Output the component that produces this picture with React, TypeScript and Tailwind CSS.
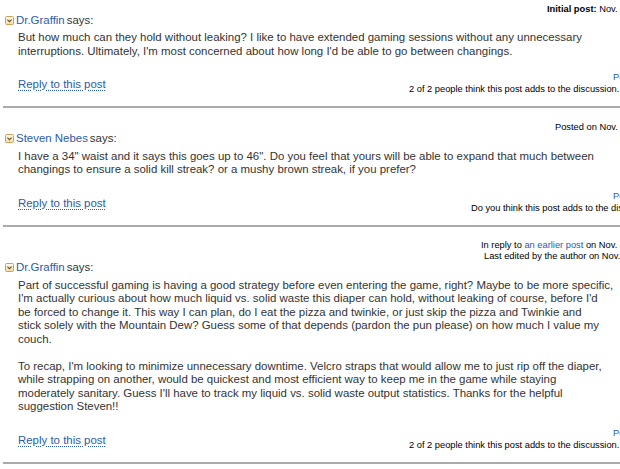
import React from "react";

interface MetaLine {
  pad: string;
  content: React.ReactNode;
}

interface Post {
  top: string;
  meta: MetaLine[];
  author: string;
  paragraphs: string[][];
  voteWidth: string;
  permPad: string;
  vote: string;
}

const posts: Post[] = [
  {
    top: "pt-[3.5px]",
    meta: [
      {
        pad: "pl-[547px]",
        content: (
          <>
            <span className="font-bold">Initial post:</span> Nov. 12, 2009 1:50:21 PM PST
          </>
        ),
      },
    ],
    author: "Dr.Graffin",
    paragraphs: [
      [
        "But how much can they hold without leaking? I like to have extended gaming sessions without any unnecessary",
        "interruptions. Ultimately, I'm most concerned about how long I'd be able to go between changings.",
      ],
    ],
    voteWidth: "w-[211px]",
    permPad: "pl-[204px]",
    vote: "2 of 2 people think this post adds to the discussion. Do you? Yes No",
  },
  {
    top: "pt-[13.5px]",
    meta: [{ pad: "pl-[555px]", content: "Posted on Nov. 12, 2009 2:04:37 PM PST" }],
    author: "Steven Nebes",
    paragraphs: [
      [
        "I have a 34\" waist and it says this goes up to 46\". Do you feel that yours will be able to expand that much between",
        "changings to ensure a solid kill streak? or a mushy brown streak, if you prefer?",
      ],
    ],
    voteWidth: "w-[149px]",
    permPad: "pl-[142px]",
    vote: "Do you think this post adds to the discussion? Yes No",
  },
  {
    top: "pt-[13.5px]",
    meta: [
      {
        pad: "pl-[481px]",
        content: (
          <>
            In reply to <a className="text-[#2a5ca8]">an earlier post</a> on Nov. 12, 2009 2:04:37 PM PST
          </>
        ),
      },
      { pad: "pl-[484px]", content: "Last edited by the author on Nov. 12, 2009 2:31:10 PM PST" },
    ],
    author: "Dr.Graffin",
    paragraphs: [
      [
        "Part of successful gaming is having a good strategy before even entering the game, right? Maybe to be more specific,",
        "I'm actually curious about how much liquid vs. solid waste this diaper can hold, without leaking of course, before I'd",
        "be forced to change it. This way I can plan, do I eat the pizza and twinkie, or just skip the pizza and Twinkie and",
        "stick solely with the Mountain Dew? Guess some of that depends (pardon the pun please) on how much I value my",
        "couch.",
      ],
      [
        "To recap, I'm looking to minimize unnecessary downtime. Velcro straps that would allow me to just rip off the diaper,",
        "while strapping on another, would be quickest and most efficient way to keep me in the game while staying",
        "moderately sanitary. Guess I'll have to track my liquid vs. solid waste output statistics. Thanks for the helpful",
        "suggestion Steven!!",
      ],
    ],
    voteWidth: "w-[211px]",
    permPad: "pl-[204px]",
    vote: "2 of 2 people think this post adds to the discussion. Do you? Yes No",
  },
];

const ToggleIcon = () => (
  <svg width="9" height="9" viewBox="0 0 9 9" className="shrink-0">
    <defs>
      <linearGradient id="tg" x1="0" y1="0" x2="0" y2="1">
        <stop offset="0" stopColor="#fffdf4" />
        <stop offset="1" stopColor="#f1dca6" />
      </linearGradient>
    </defs>
    <rect x="0.5" y="0.5" width="8" height="8" rx="1" fill="url(#tg)" stroke="#c9a15a" />
    <path d="M2.4 3.6 L4.5 5.6 L6.6 3.6" fill="none" stroke="#6e5020" strokeWidth="1.2" />
  </svg>
);

const PostBlock = ({ post }: { post: Post }) => (
  <div className={post.top}>
    {/* meta lines on the right */}
    <div className="text-[9.3px] leading-[11px] text-black">
      {post.meta.map((m, i) => (
        <div key={i} className={`${m.pad} whitespace-nowrap`}>
          {m.content}
        </div>
      ))}
    </div>

    <div className="flex items-center gap-[2px] pl-[5px] h-[11px] text-[11.45px] leading-[11px]">
      <ToggleIcon />
      <span className="text-[#2a5ca8]">{post.author}</span>
      <span className="text-[#333]">says:</span>
    </div>

    <div className="pl-[18px] mt-[5.7px] text-[11.45px] leading-[13.5px] text-[#333] whitespace-nowrap">
      {post.paragraphs.map((p, i) => (
        <p key={i} className={i > 0 ? "mt-[13.5px]" : ""}>
          {p.map((line, j) => (
            <React.Fragment key={j}>
              {line}
              {j < p.length - 1 && <br />}
            </React.Fragment>
          ))}
        </p>
      ))}
    </div>

    <div className="flex items-start mt-[13.2px] h-[24px]">
      <a className="pl-[18px] mt-[6px] text-[11.45px] leading-[14px] text-[#2a5ca8] underline decoration-dotted underline-offset-2">
        Reply to this post
      </a>
      <div className={`ml-auto ${post.voteWidth} text-[9.3px] leading-[12px] text-black whitespace-nowrap`}>
        <div className={`${post.permPad} text-[#2a5ca8]`}>Permalink</div>
        <div>{post.vote}</div>
      </div>
    </div>

    <div className="ml-[3px] mt-[11px] h-[2px] bg-[#ababab]" />
  </div>
);

export default function App() {
  return (
    <div className="w-[620px] h-[469px] overflow-hidden bg-white font-['Liberation_Sans',Arial,sans-serif]">
      {posts.map((p, i) => (
        <PostBlock key={i} post={p} />
      ))}
    </div>
  );
}
